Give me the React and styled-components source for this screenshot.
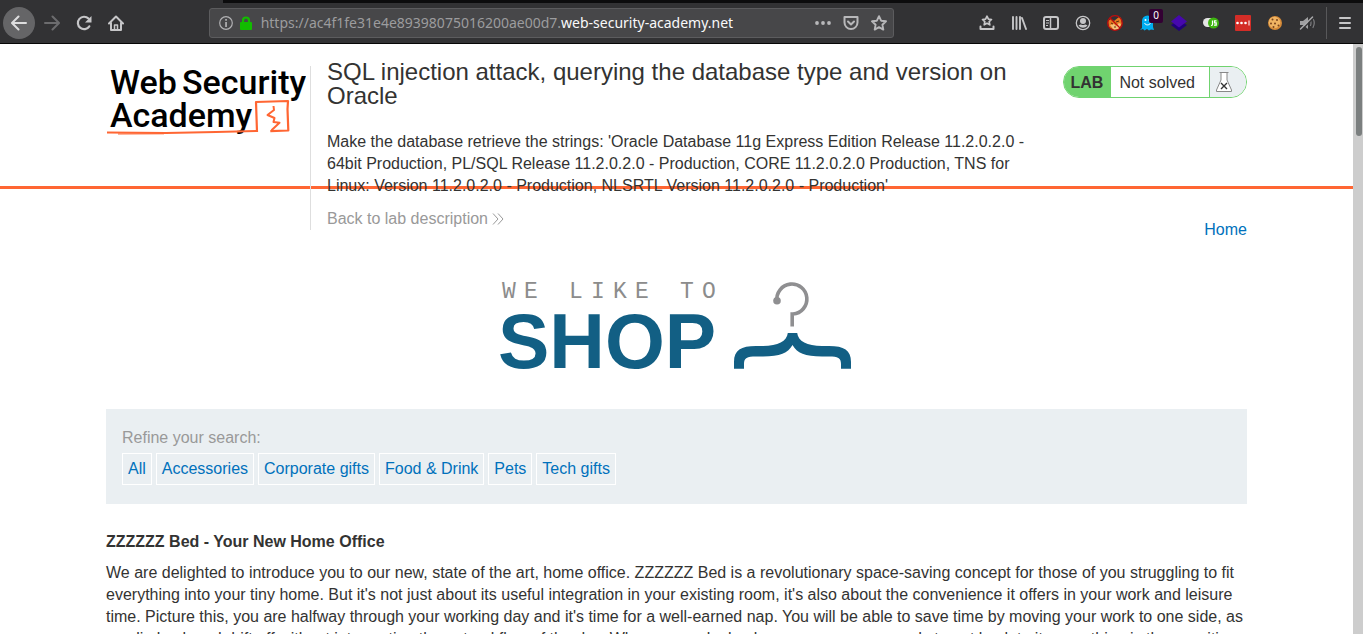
import React from "react";
import styled, { createGlobalStyle } from "styled-components";

const categories = [
  "All",
  "Accessories",
  "Corporate gifts",
  "Food & Drink",
  "Pets",
  "Tech gifts",
];

const BackIcon = () => (
  <svg width="16" height="16" fill="none" stroke="currentColor" strokeWidth="2" strokeLinecap="round" strokeLinejoin="round">
    <path d="M15 8H1.5M7.5 1.5 1 8l6.5 6.5" />
  </svg>
);

const ForwardIcon = () => (
  <svg width="16" height="16" fill="none" stroke="currentColor" strokeWidth="2" strokeLinecap="round" strokeLinejoin="round">
    <path d="M1 8h13.5M8.500 1.500 15 8l-6.500 6.500" />
  </svg>
);

const ReloadIcon = () => (
  <svg width="16" height="16">
    <path d="M13.3 11.300A6.200 6.200 0 1 1 12.500 3.600" fill="none" stroke="currentColor" strokeWidth="2.2" strokeLinecap="round" />
    <path d="M15.5 1v6.500H9Z" fill="currentColor" />
  </svg>
);

const HomeIcon = () => (
  <svg width="16" height="16" fill="none" stroke="currentColor" strokeLinecap="round" strokeLinejoin="round">
    <path d="M1 8.5 8 1.500l7 7" strokeWidth="2" />
    <path d="M3 8v7h10V8" strokeWidth="2" />
    <path d="M6.500 15v-5h3v5" strokeWidth="1.5" />
  </svg>
);

const InfoIcon = () => (
  <svg width="14" height="14">
    <circle cx="7" cy="7" r="6.3" fill="none" stroke="#b1b1b3" strokeWidth="1.2" />
    <path d="M6.200 3h1.700v1.700H6.200zM6.200 6h1.700v5H6.200z" fill="#b1b1b3" />
  </svg>
);

const LockIcon = () => (
  <svg width="12" height="14">
    <path d="M3 7V4.500a3 3 0 0 1 6 0V7" fill="none" stroke="#12bc00" strokeWidth="2.2" />
    <rect y="6" width="12" height="8" rx="1" fill="#12bc00" />
  </svg>
);

const DotsIcon = () => (
  <svg width="16" height="16" fill="currentColor">
    <circle cx="2" cy="8" r="1.9" />
    <circle cx="8" cy="8" r="1.9" />
    <circle cx="14" cy="8" r="1.9" />
  </svg>
);

const PocketIcon = () => (
  <svg width="16" height="16" fill="none" stroke="currentColor" strokeWidth="2" strokeLinecap="round" strokeLinejoin="round">
    <path d="M1.500 2h13v5.500a6.500 6.500 0 0 1-13 0Z" />
    <path d="m5 6.500 3 3 3-3" />
  </svg>
);

const StarIcon = () => (
  <svg width="16" height="16" fill="none" stroke="currentColor" strokeWidth="1.9" strokeLinejoin="round">
    <path d="m8 1.200 2.100 4.500 4.900.6-3.600 3.400.9 4.900L8 12.200l-4.300 2.400.9-4.900L1 6.300l4.900-.6Z" />
  </svg>
);

const BookmarksIcon = () => (
  <svg width="16" height="16" fill="none" stroke="currentColor" strokeWidth="1.7" strokeLinejoin="round">
    <path d="m8 1.200 1.400 2.900 3.100.4-2.300 2.200.6 3.100L8 8.300 5.200 9.800l.6-3.100-2.300-2.200 3.100-.4Z" />
    <path d="M1.500 11.500V14h13v-2.500" strokeWidth="2" strokeLinecap="round" />
  </svg>
);

const LibraryIcon = () => (
  <svg width="16" height="16" fill="none" stroke="currentColor" strokeWidth="1.9" strokeLinecap="round">
    <path d="M2 2v12M5.500 2v12M9 2v12M11 3l4 11" />
  </svg>
);

const SidebarIcon = () => (
  <svg width="16" height="16" fill="none" stroke="currentColor">
    <rect x="1" y="2" width="14" height="12" rx="2" strokeWidth="2" />
    <path d="M7.500 3v10" strokeWidth="1.5" />
    <path d="M3 5.500h3M3 8h3M3 10.500h2" />
  </svg>
);

const AccountIcon = () => (
  <svg width="16" height="16">
    <circle cx="8" cy="8" r="6.7" fill="none" stroke="currentColor" strokeWidth="1.3" />
    <circle cx="8" cy="6" r="3" fill="currentColor" />
    <path d="M3.500 10.500c1-1 2-1 2.500-1q2 1 4 0c.5 0 1.500 0 2.500 1a5.500 5.500 0 0 1-9 0Z" fill="currentColor" />
  </svg>
);

const FoxIcon = () => (
  <svg width="16" height="16">
    <path d="m1 6 3-2 3 2 5-4 2 1 1 6-3 5-5 1-5-3Z" fill="#e57a20" />
    <path d="m3 10 4-1 2 2 3-3 2 1-2 5-5 1Z" fill="#f6c27a" />
    <path d="m4 8 2 1M9 7l3-1M7 12h2" stroke="#5b2b13" />
    <circle cx="8" cy="8" r="7.3" fill="none" stroke="#c00c0c" strokeWidth="1.3" />
    <path d="m3 3 10 10" stroke="#c00c0c" strokeWidth="1.3" />
  </svg>
);

const GhostIcon = () => (
  <svg width="16" height="16">
    <path d="M3 13V6a5.500 5.500 0 0 1 11 0v6l1 3-3-.5-2 1-2-1.500-2.500 1.500L4 14l-3 1Z" fill="#00aef0" />
    <circle cx="6.500" cy="5" r="1" fill="#fff" />
    <circle cx="10.500" cy="5" r="1" fill="#fff" />
    <path d="M5.500 8c1 2.500 5 2.500 6 0" fill="none" stroke="#fff" />
  </svg>
);

const LayersIcon = () => (
  <svg width="16" height="16">
    <path d="m0 10 8-5 8 5-8 6Z" fill="#20007a" />
    <path d="m0 6.500 8-6.500 8 6.500-8 6Z" fill="#4608ad" />
  </svg>
);

const ScriptIcon = () => (
  <svg width="16" height="16">
    <rect y="3" width="14" height="9" rx="4.500" fill="#e4e4e4" />
    <circle cx="10.500" cy="8" r="5.500" fill="#3eb510" />
    <path d="M9.500 5.500v4q0 1-1.500 1M13.500 5.800h-2v2h1.700v2.300H11" fill="none" stroke="#fff" strokeWidth="1.2" />
  </svg>
);

const PasswordIcon = () => (
  <svg width="16" height="16">
    <rect width="16" height="16" rx="1" fill="#d32d27" />
    <path d="M14 5.500v5" stroke="#fff" />
    <circle cx="2.500" cy="8" r="1.3" fill="#fff" />
    <circle cx="6.500" cy="8" r="1.3" fill="#fff" />
    <circle cx="10.500" cy="8" r="1.3" fill="#fff" />
  </svg>
);

const CookieIcon = () => (
  <svg width="16" height="16">
    <circle cx="8" cy="8" r="7" fill="#d58a38" />
    <circle cx="7.500" cy="7.500" r="5.800" fill="#efb362" />
    <g fill="#7a431c">
      <circle cx="5.500" cy="4.500" r="1" />
      <circle cx="10" cy="5" r="1" />
      <circle cx="4" cy="8.500" r="1" />
      <circle cx="8" cy="8.500" r="1" />
      <circle cx="6.500" cy="12" r="1" />
      <circle cx="11.500" cy="10.500" r="1" />
    </g>
  </svg>
);

const MutedIcon = () => (
  <svg width="16" height="16" fill="none" stroke="#7e7e80" strokeLinecap="round">
    <path d="M1 6h3l5-4v12l-5-4H1Z" fill="#a0a0a2" stroke="none" />
    <path d="M11.500 5.500q1 2.500 0 5M14 3.500q2.500 4.500 0 9" strokeWidth="1.2" />
    <path d="M2.500 15 14.500 3" stroke="#323234" strokeWidth="1.5" />
    <path d="M1.500 14 13.500 2" stroke="#a9a9ab" strokeWidth="1.5" />
  </svg>
);

const MenuIcon = () => (
  <svg width="12" height="14" stroke="currentColor" strokeWidth="2" strokeLinecap="round">
    <path d="M1 2h10M1 7h10M1 12h10" />
  </svg>
);

const extensions = [
  { label: "Bookmarks", icon: <BookmarksIcon /> },
  { label: "Library", icon: <LibraryIcon /> },
  { label: "Sidebars", icon: <SidebarIcon /> },
  { label: "Account", icon: <AccountIcon /> },
  { label: "Proxy", icon: <FoxIcon /> },
  { label: "Trackers", icon: <GhostIcon />, badge: "0" },
  { label: "Layers", icon: <LayersIcon /> },
  { label: "Scripts", icon: <ScriptIcon /> },
  { label: "Passwords", icon: <PasswordIcon /> },
  { label: "Cookies", icon: <CookieIcon /> },
  { label: "Mute", icon: <MutedIcon /> },
];

const AcademyLogo = () => (
  <LogoDrawing width="200" height="76" role="img" aria-label="Web Security Academy">
    <g fill="#000" fontFamily="Roboto, sans-serif" fontSize="34" fontWeight="500">
      <text x="4" y="32">Web</text>
      <text x="76" y="32">Security</text>
      <text x="4" y="65">Academy</text>
    </g>
    <g fill="none" stroke="#ff6633" strokeLinejoin="round">
      <path d="M1 70.500 60 71 110 70 151 69" strokeWidth="2" />
      <path d="M12 72 58 71.800" strokeWidth="1" />
      <path d="M151 70 150 40l32-1-.5 8 .8 21.500-18 .6" strokeWidth="2.2" />
      <path d="m167.500 44 .5 4-6.500 5 7 3-1 4 6 .8-8 7.500" strokeWidth="2" />
    </g>
  </LogoDrawing>
);

const ShopLogo = () => (
  <svg width="374" height="110" role="img" aria-label="We like to shop">
    <text
      x="12 34 79 101 123 145 190 212"
      y="28"
      fill="#8c8c8c"
      fontFamily="'Liberation Mono', monospace"
      fontSize="23"
    >
      WELIKETO
    </text>
    <text x="8" y="98" fill="#125f84" fontFamily="'Liberation Sans', Arial, sans-serif" fontSize="77" fontWeight="700">
      SHOP
    </text>
    <path d="M287 31A15 15 0 1 1 303 44h-.8v12.500" fill="none" stroke="#8f8f91" strokeWidth="3.600" />
    <circle cx="287" cy="30.700" r="3.800" fill="#8f8f91" />
    <path
      d="M297.800 63C297 71 288 76 273 76h-7C251 76 244 80 244 92v6.700h10V94c0-6 3-7.500 12-7.500h7C290 86.500 298 83 302.500 75C307 83 315 86.500 332 86.500h7c9 0 12 1.500 12 7.500v4.700h10V92C361 80 354 76 339 76h-7C317 76 308 71 307.200 63Z"
      fill="#125f84"
    />
  </svg>
);

const FlaskIcon = () => (
  <svg width="18" height="22" fill="none">
    <path d="M6 2v7L1.500 19v1.500h15V19L12 9V2" fill="#fff" stroke="#888" />
    <path d="M4.500 1.500h9" stroke="#888" />
    <path d="m6 12 6 6m0-6-6 6" stroke="#333" strokeWidth="1.400" />
  </svg>
);

const App = () => {
  return (
    <Window>
      <GlobalStyle />
      <TabStrip>
        <ActiveTab />
      </TabStrip>
      <Toolbar>
        <BackButton aria-label="Back">
          <BackIcon />
        </BackButton>
        <ToolButton aria-label="Forward" $dim>
          <ForwardIcon />
        </ToolButton>
        <ToolButton aria-label="Reload">
          <ReloadIcon />
        </ToolButton>
        <ToolButton aria-label="Home">
          <HomeIcon />
        </ToolButton>
        <Spacer />
        <AddressBar>
          <InfoIcon />
          <LockIcon />
          <Address>
            https://ac4f1fe31e4e89398075016200ae00d7.<Domain>web-security-academy.net</Domain>
          </Address>
          <AddressButton aria-label="Page actions">
            <DotsIcon />
          </AddressButton>
          <AddressButton aria-label="Save to Pocket">
            <PocketIcon />
          </AddressButton>
          <AddressButton aria-label="Bookmark this page">
            <StarIcon />
          </AddressButton>
        </AddressBar>
        <Spacer />
        {extensions.map((item) => (
          <ToolButton key={item.label} aria-label={item.label}>
            {item.icon}
            {item.badge && <Badge>{item.badge}</Badge>}
          </ToolButton>
        ))}
        <MenuButton aria-label="Menu">
          <MenuIcon />
        </MenuButton>
      </Toolbar>

      <Viewport>
        <Page>
          <Header>
            <HeaderInner>
              <AcademyLogo />
              <TitleBlock>
                <Title>
                  SQL injection attack, querying the database type and version on Oracle
                </Title>
                <Text>
                  Make the database retrieve the strings: 'Oracle Database 11g Express
                  Edition Release 11.2.0.2.0 - 64bit Production, PL/SQL Release
                  11.2.0.2.0 - Production, CORE 11.2.0.2.0 Production, TNS for Linux:
                  Version 11.2.0.2.0 - Production, NLSRTL Version 11.2.0.2.0 -
                  Production'
                </Text>
                <BackLink href="#lab">
                  Back to lab description
                  <svg width="12" height="12" fill="none" stroke="currentColor">
                    <path d="m1 .5 5 5.500-5 5.500M6 .5l5 5.500-5 5.500" />
                  </svg>
                </BackLink>
              </TitleBlock>
              <Status>
                <StatusLabel>LAB</StatusLabel>
                <StatusText>Not solved</StatusText>
                <StatusIcon>
                  <FlaskIcon />
                </StatusIcon>
              </Status>
            </HeaderInner>
          </Header>

          <Container>
            <Nav>
              <Link href="#home">Home</Link>
            </Nav>
            <Banner>
              <ShopLogo />
            </Banner>
            <Filters>
              <FiltersLabel>Refine your search:</FiltersLabel>
              <FilterList>
                {categories.map((category) => (
                  <FilterLink key={category} href="#filter">
                    {category}
                  </FilterLink>
                ))}
              </FilterList>
            </Filters>
            <ProductTitle>ZZZZZZ Bed - Your New Home Office</ProductTitle>
            <Text>
              We are delighted to introduce you to our new, state of the art, home
              office. ZZZZZZ Bed is a revolutionary space-saving concept for those of you
              struggling to fit everything into your tiny home. But it's not just about
              its useful integration in your existing room, it's also about the
              convenience it offers in your work and leisure time. Picture this, you are
              halfway through your working day and it's time for a well-earned nap. You
              will be able to save time by moving your work to one side, as you lie back
              and drift off without interrupting the natural flow of the day. When you
              wake back up, once you are ready to get back to it, everything is there
              waiting for you.
            </Text>
          </Container>
        </Page>
        <ScrollTrack>
          <ScrollThumb />
        </ScrollTrack>
      </Viewport>
    </Window>
  );
};

export default App;

const GlobalStyle = createGlobalStyle`
  * {
    box-sizing: border-box;
  }

  body {
    margin: 0;
    color: #333332;
    background: #fff;
    font-family: "Liberation Sans", Arial, sans-serif;
    font-size: 16px;
    line-height: 22px;
  }

  button {
    padding: 0;
    border: 0;
    background: none;
    font: inherit;
  }

  svg {
    display: block;
    flex-shrink: 0;
  }
`;

const Window = styled.div`
  display: flex;
  flex-direction: column;
  height: 100vh;
  overflow: hidden;
`;

const TabStrip = styled.div`
  flex-shrink: 0;
  height: 3px;
  background: #0c0c0d;
`;

const ActiveTab = styled.div`
  width: 223px;
  height: 3px;
  background: #323234;
`;

const Toolbar = styled.div`
  display: flex;
  align-items: center;
  flex-shrink: 0;
  height: 41px;
  padding-left: 3px;
  background: #323234;
  border-bottom: 1px solid #060606;
`;

const ToolButton = styled.button`
  position: relative;
  display: grid;
  place-items: center;
  flex-shrink: 0;
  width: 32px;
  height: 32px;
  color: ${(props) => (props.$dim ? "#6c6c6e" : "#c6c6c8")};
`;

const BackButton = styled(ToolButton)`
  margin-right: 1px;
  color: #dededf;
  background: #656567;
  border-radius: 50%;
`;

const MenuButton = styled(ToolButton)`
  width: 37px;
  margin-left: 3px;
  border-left: 1px solid #58585a;
`;

const Badge = styled.span`
  position: absolute;
  top: 2px;
  right: 0;
  width: 14px;
  height: 14px;
  border-radius: 2px;
  color: #fff;
  background: #330033;
  font-family: "Noto Sans", sans-serif;
  font-size: 10px;
  line-height: 13px;
  text-align: center;
`;

const Spacer = styled.div`
  flex: 8;
`;

const AddressBar = styled.div`
  display: flex;
  align-items: center;
  flex: 70;
  gap: 7px;
  height: 30px;
  padding: 0 4px 0 9px;
  color: #b8b8ba;
  background: #474749;
  border: 1px solid #5c5c5e;
  border-radius: 3px;
`;

const Address = styled.div`
  flex: 1;
  padding-left: 2px;
  color: #9c9c9e;
  font-family: "Noto Sans", sans-serif;
  font-size: 14px;
  white-space: nowrap;
`;

const Domain = styled.span`
  color: #f9f9fa;
`;

const AddressButton = styled.button`
  display: grid;
  place-items: center;
  width: 21px;
  height: 28px;
  color: inherit;
`;

const Viewport = styled.div`
  display: flex;
  flex: 1;
  min-height: 0;
`;

const Page = styled.main`
  flex: 1;
  overflow: hidden;
`;

const ScrollTrack = styled.div`
  width: 10px;
  padding: 3px 1px 0 3px;
  background: #cdcdcd;
`;

const ScrollThumb = styled.div`
  height: 89px;
  border-radius: 3px;
  background: #7b7f7f;
`;

const Container = styled.div`
  max-width: 1141px;
  margin: 0 auto;
`;

const Header = styled.header`
  height: 145px;
  border-bottom: 3px solid #ff6633;
`;

const HeaderInner = styled(Container)`
  display: flex;
  align-items: flex-start;
`;

const LogoDrawing = styled.svg`
  margin: 18px 4px 0 0;
`;

const TitleBlock = styled.div`
  flex: 1;
  margin-top: 22px;
  padding: 0 24px 0 16px;
  border-left: 1px solid #dedede;
`;

const Title = styled.h2`
  margin: -6px 0 23px;
  font-size: 24px;
  font-weight: 400;
  line-height: 24px;
`;

const Text = styled.p`
  margin: 0;
`;

const BackLink = styled.a`
  display: flex;
  align-items: center;
  gap: 4px;
  margin-top: 11px;
  color: #999;
  text-decoration: none;
`;

const Status = styled.div`
  display: flex;
  height: 32px;
  margin-top: 22px;
  overflow: hidden;
  border: 1px solid #70d36f;
  border-radius: 16px;
  line-height: 32px;
`;

const StatusLabel = styled.strong`
  padding: 0 8px 0 7px;
  background: #70d36f;
`;

const StatusText = styled.span`
  padding: 0 14px 0 8px;
  line-height: 31px;
`;

const StatusIcon = styled.span`
  display: grid;
  align-items: center;
  width: 37px;
  padding-left: 5px;
  background: #eaeff2;
  border-left: 1px solid #70d36f;
`;

const Nav = styled.nav`
  display: flex;
  justify-content: flex-end;
  padding-top: 30px;
`;

const Link = styled.a`
  color: #0071bc;
  text-decoration: none;
`;

const Banner = styled.div`
  display: flex;
  justify-content: center;
  padding: 29px 0;
`;

const Filters = styled.section`
  padding: 18px 16px 19px;
  background: #eaeff2;
`;

const FiltersLabel = styled.div`
  margin-bottom: 4px;
  color: #999;
`;

const FilterList = styled.div`
  display: flex;
  flex-wrap: wrap;
  gap: 4px;
`;

const FilterLink = styled(Link)`
  padding: 4px 5px;
  border: 1px solid #fff;
`;

const ProductTitle = styled.h3`
  margin: 27px 0 9px;
  font-size: 16px;
`;
